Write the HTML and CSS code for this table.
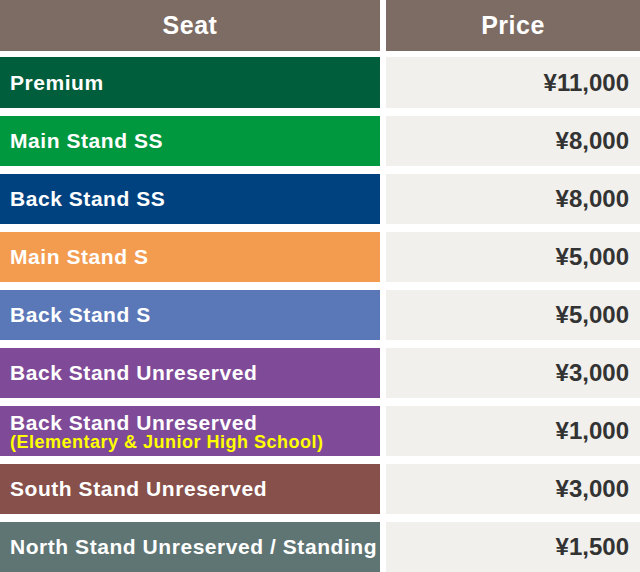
FILE: index.html
```html
<!DOCTYPE html>
<html lang="en">
<head>
<meta charset="utf-8">
<title>Seat Prices</title>
<link rel="stylesheet" href="styles.css">
</head>
<body>
<div class="table">
  <div class="head">Seat</div>
  <div class="head">Price</div>

  <div class="seat premium">Premium</div>
  <div class="price">¥11,000</div>

  <div class="seat main-ss">Main Stand SS</div>
  <div class="price">¥8,000</div>

  <div class="seat back-ss">Back Stand SS</div>
  <div class="price">¥8,000</div>

  <div class="seat main-s">Main Stand S</div>
  <div class="price">¥5,000</div>

  <div class="seat back-s">Back Stand S</div>
  <div class="price">¥5,000</div>

  <div class="seat back-u">Back Stand Unreserved</div>
  <div class="price">¥3,000</div>

  <div class="seat back-u two-line">Back Stand Unreserved<span class="note">(Elementary &amp; Junior High School)</span></div>
  <div class="price">¥1,000</div>

  <div class="seat south-u">South Stand Unreserved</div>
  <div class="price">¥3,000</div>

  <div class="seat north-u">North Stand Unreserved / Standing</div>
  <div class="price">¥1,500</div>
</div>
</body>
</html>
```
FILE: styles.css
```css
html, body {
  margin: 0;
  padding: 0;
  background: #ffffff;
}
body {
  font-family: "Liberation Sans", Arial, sans-serif;
  font-weight: bold;
}
.table {
  display: grid;
  grid-template-columns: 380px 254px;
  grid-auto-rows: 50px;
  column-gap: 6px;
  row-gap: 8px;
  width: 640px;
}
.head {
  background: #7d6c64;
  color: #ffffff;
  font-size: 25px;
  letter-spacing: 0.5px;
  display: flex;
  align-items: center;
  justify-content: center;
  margin-bottom: -1px;
}
.table > .head + .head + .seat,
.table > .head + .head + .seat + .price {
  margin-top: -1px;
}
.seat {
  color: #ffffff;
  font-size: 21px;
  padding-left: 10px;
  display: flex;
  flex-direction: column;
  justify-content: center;
  letter-spacing: 0.55px;
}
.two-line {
  line-height: 21px;
  padding-top: 1px;
}
.note {
  color: #ffff00;
  font-size: 18px;
  line-height: 19px;
  letter-spacing: 0.5px;
}
.price {
  background: #f1f0ec;
  color: #333333;
  font-size: 24px;
  display: flex;
  align-items: center;
  justify-content: flex-end;
  padding-right: 11px;
}
.premium { background: #005e3c; }
.main-ss { background: #00983f; }
.back-ss { background: #004280; }
.main-s { background: #f39b4f; }
.back-s { background: #5a77b8; }
.back-u { background: #7f4a98; }
.south-u { background: #87504a; }
.north-u { background: #5e7574; }
```
